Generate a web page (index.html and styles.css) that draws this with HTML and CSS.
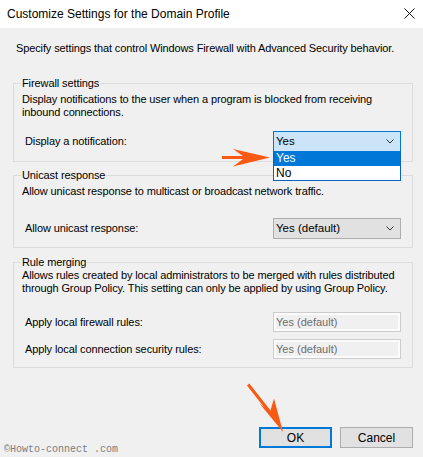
FILE: index.html
```html
<!DOCTYPE html>
<html>
<head>
<meta charset="utf-8">
<title>Customize Settings for the Domain Profile</title>
<link rel="stylesheet" href="styles.css">
</head>
<body>
<div class="window">
  <div class="titlebar">
    <span class="title">Customize Settings for the Domain Profile</span>
    <svg class="close" width="11" height="11" viewBox="0 0 11 11"><path d="M0.5 0.5 L10.5 10.5 M10.5 0.5 L0.5 10.5" stroke="#111" stroke-width="1" fill="none"/></svg>
  </div>
  <div class="content">
    <p class="intro">Specify settings that control Windows Firewall with Advanced Security behavior.</p>

    <fieldset class="group g1">
      <legend>Firewall settings</legend>
      <p class="desc">Display notifications to the user when a program is blocked from receiving<br>inbound connections.</p>
      <div class="row r1">
        <span class="label">Display a notification:</span>
        <div class="combo focused">
          <span class="value">Yes</span>
          <svg class="chev" width="8" height="5" viewBox="0 0 8 5"><path d="M0.5 0.5 L4 4 L7.5 0.5" stroke="#333" stroke-width="1" fill="none"/></svg>
          <ul class="list">
            <li class="sel">Yes</li>
            <li>No</li>
          </ul>
        </div>
      </div>
    </fieldset>

    <fieldset class="group g2">
      <legend>Unicast response</legend>
      <p class="desc">Allow unicast response to multicast or broadcast network traffic.</p>
      <div class="row r2">
        <span class="label">Allow unicast response:</span>
        <div class="combo">
          <span class="value">Yes (default)</span>
          <svg class="chev" width="8" height="5" viewBox="0 0 8 5"><path d="M0.5 0.5 L4 4 L7.5 0.5" stroke="#333" stroke-width="1" fill="none"/></svg>
        </div>
      </div>
    </fieldset>

    <fieldset class="group g3">
      <legend>Rule merging</legend>
      <p class="desc d3">Allows rules created by local administrators to be merged with rules distributed<br>through Group Policy. This setting can only be applied by using Group Policy.</p>
      <div class="row r3">
        <span class="label">Apply local firewall rules:</span>
        <div class="textbox">Yes (default)</div>
      </div>
      <div class="row r4">
        <span class="label">Apply local connection security rules:</span>
        <div class="textbox">Yes (default)</div>
      </div>
    </fieldset>
  </div>

  <div class="buttons">
    <button class="btn default">OK</button>
    <button class="btn">Cancel</button>
  </div>

  <div class="watermark">©Howto-connect .com</div>

  <svg class="arrows" width="423" height="457" viewBox="0 0 423 457">
    <g fill="#f85a14">
      <polygon points="222,156 247,156 247,159 222,159"/>
      <polygon points="270,157.5 233,149 245,157.5 233,166.5"/>
      <polygon points="247,385.5 249.3,383.6 271,411 268.5,413"/>
      <polygon points="283,432 259.5,403.5 270,412 274,398.5"/>
    </g>
  </svg>
</div>
</body>
</html>
```
FILE: styles.css
```css
* { box-sizing: border-box; }

html, body {
  margin: 0;
  padding: 0;
  background: #f0f0f0;
}

body {
  font-family: "Liberation Sans", Arial, sans-serif;
  font-size: 11px;
  line-height: 13px;
  color: #000;
}

.window {
  position: relative;
  width: 423px;
  height: 457px;
  display: flex;
  flex-direction: column;
  overflow: hidden;
  background: #f0f0f0;
}

.titlebar {
  height: 28px;
  flex: none;
  background: #fff;
  display: flex;
  align-items: center;
  justify-content: space-between;
  padding: 0 8px 1px 7px;
}

.title {
  font-size: 12px;
  line-height: 14px;
  color: #000;
}

.close { display: block; }

.content {
  flex: 1;
  padding: 0 10px 0 13px;
}

.intro {
  margin: 14px 0 0 3px;
  letter-spacing: -0.12px;
}

.group {
  margin: 0;
  border: 1px solid #dcdcdc;
  padding: 0 11px 9px 8px;
  min-width: 0;
}

.group legend {
  padding: 0 1px;
  margin-left: -1px;
  line-height: 13px;
  letter-spacing: -0.1px;
}

.g1 { margin-top: 22px; }
.g2 { margin-top: 7px; padding-bottom: 8px; }
.g3 { margin-top: 8px; padding-bottom: 8px; }

.desc {
  margin: 3px 0 0 0;
  letter-spacing: -0.12px;
}

.desc.d3 { margin-top: 0; }

.row {
  display: flex;
  align-items: center;
  justify-content: space-between;
  padding-left: 3px;
}

.r1 { margin-top: 12px; }
.r2 { margin-top: 20px; }
.r3 { margin-top: 17px; }
.r4 { margin-top: 7px; }

.label { letter-spacing: -0.1px; }

.combo {
  position: relative;
  width: 128px;
  height: 21px;
  border: 1px solid #adadad;
  background: #e1e1e1;
  display: flex;
  align-items: center;
  justify-content: space-between;
  padding: 0 6px 0 2px;
}

.combo.focused {
  border-color: #0078d7;
  background: #cce4f7;
}

.chev { display: block; }

.list {
  position: absolute;
  left: -1px;
  top: 19px;
  width: 128px;
  margin: 0;
  padding: 0;
  list-style: none;
  background: #fff;
  border: 1px solid #0a63c2;
  border-top: none;
}

.list li {
  height: 14px;
  line-height: 14px;
  padding-left: 2px;
  font-size: 12px;
}

.list li.sel {
  background: #0078d7;
  color: #fff;
  height: 15px;
}

.value { font-size: 11.5px; }

.textbox {
  width: 128px;
  height: 20px;
  border: 1px solid #cccccc;
  box-shadow: inset 0 0 0 2px #fbfbfb;
  background: #f0f0f0;
  color: #6d6d6d;
  padding: 0 0 0 2px;
  display: flex;
  align-items: center;
}

.buttons {
  flex: none;
  display: flex;
  justify-content: flex-end;
  gap: 8px;
  padding: 0 10px 9px 0;
}

.btn {
  width: 73px;
  height: 21px;
  margin: 0;
  padding: 0;
  font-family: "Liberation Sans", Arial, sans-serif;
  font-size: 12px;
  color: #000;
  background: #e1e1e1;
  border: 1px solid #adadad;
}

.btn.default {
  border: 2px solid #0078d7;
  width: 73px;
}

.watermark {
  position: absolute;
  left: 4px;
  top: 444px;
  font-family: "Liberation Mono", "Courier New", monospace;
  font-size: 10px;
  line-height: 12px;
  color: #7c7c7c;
}

.arrows {
  position: absolute;
  left: 0;
  top: 0;
  pointer-events: none;
}
```
